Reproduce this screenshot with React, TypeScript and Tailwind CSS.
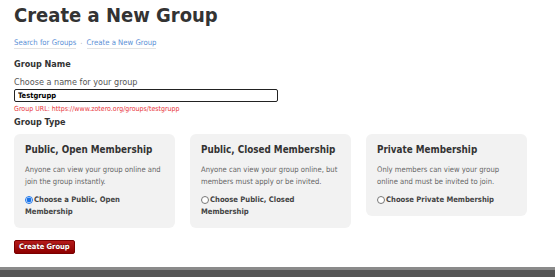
import React from 'react';

const font = { fontFamily: '"DejaVu Sans Condensed", "DejaVu Sans", Tahoma, sans-serif' };

interface CardProps {
  title: string;
  text: string;
  label: string;
  checked?: boolean;
}

const TypeCard: React.FC<CardProps> = ({ title, text, label, checked }) => (
  <div className="w-[161px] shrink-0 rounded-[6px] bg-[#f2f2f2] px-[11px] pt-[10px] pb-[10px]">
    <h3 className="text-[9.8px] font-bold leading-[12px] text-[#333]">{title}</h3>
    <p className="mt-[8px] text-[7.6px] leading-[12px] text-[#666]">{text}</p>
    <label className="mt-[6px] block text-[7.6px] font-bold leading-[12px] text-[#444]">
      <input
        type="radio"
        name="type"
        defaultChecked={checked}
        className="mr-[1px] h-[8px] w-[8px] translate-y-[2px] align-top accent-[#1a73e8]"
      />
      {label}
    </label>
  </div>
);

export default function App() {
  return (
    <div className="flex h-[277px] w-[555px] flex-col overflow-hidden bg-white" style={font}>
      <div className="flex-1 px-[14px]">
        <h1 className="pt-[3px] text-[20px] font-bold leading-[24px] text-[#333]">Create a New Group</h1>

        <div className="mt-[11px] flex items-center gap-[4px] text-[7.7px] leading-[10px] text-[#5b8fd6]">
          <a className="border-b border-[#e3e3e3]">Search for Groups</a>
          <span className="text-[#aaa]">·</span>
          <a className="border-b border-[#e3e3e3]">Create a New Group</a>
        </div>

        <h2 className="mt-[9px] text-[9px] font-bold leading-[12px] text-[#333]">Group Name</h2>

        <div className="mt-[7px] text-[9px] leading-[11px] text-[#555]">Choose a name for your group</div>
        <input
          type="text"
          defaultValue="Testgrupp"
          className="mt-[1px] block h-[13px] w-[264px] rounded-[2px] border border-[#222] px-[3px] text-[7.5px] font-bold leading-[11px] text-black outline-none"
        />
        <div className="mt-[2px] text-[7px] leading-[10px] text-[#e8333a]">
          Group URL: https://www.zotero.org/groups/testgrupp
        </div>

        <h2 className="mt-[2px] text-[9px] font-bold leading-[12px] text-[#333]">Group Type</h2>

        <div className="mt-[6px] flex items-start gap-[15px]">
          <TypeCard
            title="Public, Open Membership"
            text="Anyone can view your group online and join the group instantly."
            label="Choose a Public, Open Membership"
            checked
          />
          <TypeCard
            title="Public, Closed Membership"
            text="Anyone can view your group online, but members must apply or be invited."
            label="Choose Public, Closed Membership"
          />
          <TypeCard
            title="Private Membership"
            text="Only members can view your group online and must be invited to join."
            label="Choose Private Membership"
          />
        </div>

        <button className="mt-[12px] h-[14px] rounded-[2px] border border-[#7a0000] bg-gradient-to-b from-[#b51a1a] to-[#8e0000] px-[4px] text-[7.5px] font-bold leading-[12px] text-white [text-shadow:0_-1px_0_rgba(0,0,0,0.4)]">
          Create Group
        </button>
      </div>

      <div className="h-[10px] border-t-[3px] border-[#8a8a8a] bg-[#555]" />
    </div>
  );
}
